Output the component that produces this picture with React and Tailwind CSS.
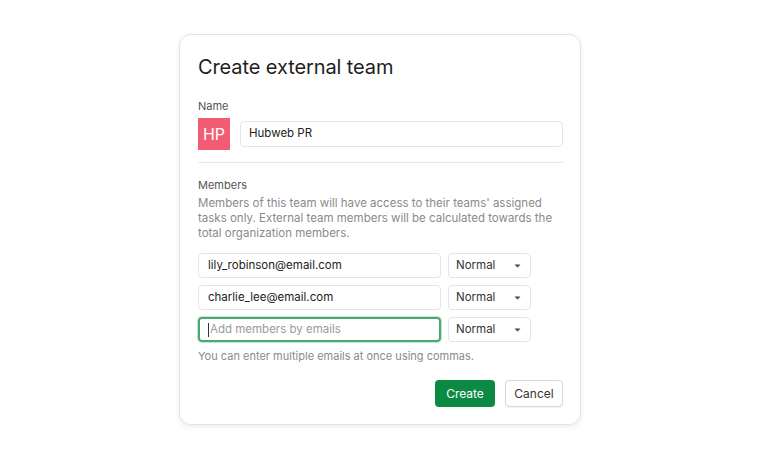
import React from 'react';

function RoleSelect() {
  return (
    <div className="flex h-[25px] w-[83px] items-center justify-between rounded border border-[#e5e5e5] bg-white pl-[7px] pr-[9px] text-[11.5px] text-[#333]">
      <span>Normal</span>
      <svg width="7" height="4" viewBox="0 0 7 4" className="mt-[1px]">
        <path d="M0.5 0.5 L3.5 3.5 L6.5 0.5 Z" fill="#444" />
      </svg>
    </div>
  );
}

function EmailRow({ value, focused }) {
  return (
    <div className="flex items-center gap-[7px]">
      {focused ? (
        <div className="flex h-[25px] w-[243px] items-center rounded border-2 border-[#4aa871] px-[8px] text-[11.5px] text-[#9a9a9a] shadow-[0_0_0_1px_#c8e6d2]">
          <span className="mr-[1px] h-[14px] w-px bg-[#333]" />
          <span>Add members by emails</span>
        </div>
      ) : (
        <div className="flex h-[25px] w-[243px] items-center rounded border border-[#e5e5e5] px-[9px] text-[11.5px] text-[#222]">
          {value}
        </div>
      )}
      <RoleSelect />
    </div>
  );
}

export default function App() {
  return (
    <div
      className="flex h-[461px] w-[760px] justify-center bg-white pt-[34px]"
      style={{ fontFamily: 'Inter, "Noto Sans", sans-serif' }}
    >
      <div className="h-[391px] w-[402px] rounded-[12px] border border-[#e3e3e3] bg-white pl-[18px] pr-[17px] pt-[19px] shadow-[0_2px_6px_rgba(0,0,0,0.08)]">
        <h1 className="text-[20px] leading-[26px] font-normal tracking-[-0.1px] text-[#1e1e1e]">Create external team</h1>

        <div className="mt-[18px] text-[11px] leading-[16px] text-[#555]">Name</div>
        <div className="mt-[4px] flex items-center gap-[10px]">
          <div className="flex h-[32px] w-[32px] items-center justify-center bg-[#f25c74] text-[16px] text-white">HP</div>
          <div className="flex h-[26px] flex-1 items-center rounded border border-[#e5e5e5] px-[8px] text-[11.5px] text-[#222]">
            Hubweb PR
          </div>
        </div>

        <div className="mt-[12px] h-px bg-[#e8e8e8]" />

        <div className="mt-[14px] text-[11px] leading-[16px] text-[#555]">Members</div>
        <p className="mt-[3px] text-[11.5px] leading-[15px] text-[#8a8a8a]">
          Members of this team will have access to their teams' assigned tasks only. External team members will be calculated towards the total organization members.
        </p>

        <div className="mt-[12px] flex flex-col gap-[7px]">
          <EmailRow value="lily_robinson@email.com" />
          <EmailRow value="charlie_lee@email.com" />
          <EmailRow focused />
        </div>

        <div className="mt-[6px] text-[11px] leading-[16px] text-[#8a8a8a]">
          You can enter multiple emails at once using commas.
        </div>

        <div className="mt-[16px] flex justify-end gap-[10px]">
          <button className="h-[27px] w-[60px] rounded bg-[#0b8a43] text-[12px] text-white">Create</button>
          <button className="h-[27px] w-[58px] rounded border border-[#d8d8d8] bg-white text-[12px] text-[#333] shadow-[0_1px_1px_rgba(0,0,0,0.06)]">
            Cancel
          </button>
        </div>
      </div>
    </div>
  );
}
